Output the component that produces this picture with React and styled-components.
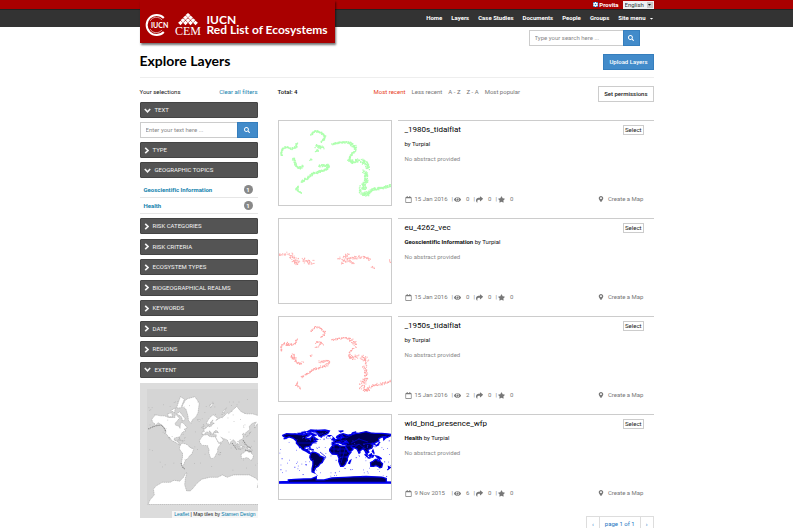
import React from "react";
import styled, { createGlobalStyle } from "styled-components";
import {
  FaSearch, FaRegCalendar, FaEye, FaShare,
  FaStar, FaMapMarkerAlt, FaCog, FaCaretDown,
} from "react-icons/fa";

const Global = createGlobalStyle`
  *, *::before, *::after { box-sizing: border-box; }
  html { scrollbar-width: none; }
  body { margin: 0; background: #fff; color: #111; font: 6px/10px Roboto, Lato, sans-serif; font-variant-ligatures: none; }
  button, input, select { font: inherit; margin: 0; border-radius: 0; }
  button { cursor: pointer; }
  a { text-decoration: none; color: inherit; }
  svg { display: block; flex: none; }
  h1, h2, p, ul { margin: 0; padding: 0; }
  ul { list-style: none; }
`;

/* ---------- page frame ---------- */
const Container = styled.div`
  position: relative;
  max-width: 514px;
  margin: 0 auto;
`;
const AccountBar = styled.div`
  background: #a90000;
`;
const AccountRow = styled(Container)`
  display: flex;
  justify-content: flex-end;
  align-items: center;
  gap: 4px;
  height: 9px;
  color: #fff;
`;
const Account = styled.a`
  display: flex;
  align-items: center;
  gap: 1px;
  font-weight: 700;
`;
const AccountIcon = styled.span`
  background: #1c7fc0;
  border-radius: 1px;
`;
const LanguageWrap = styled.span`
  display: flex;
  align-items: center;
  position: relative;
`;
const Language = styled.select`
  appearance: none;
  width: 31px;
  height: 8px;
  padding: 0 2px;
  border: 0;
  background: #eef0f2;
  color: #333;
  line-height: 8px;
`;
const SelectArrow = styled.span`
  position: absolute;
  right: 1px;
  top: 1px;
  display: grid;
  place-items: center;
  width: 6px;
  height: 6px;
  background: #c8c8c8;
  color: #111;
  pointer-events: none;
`;
const NavBar = styled.header`
  background: #333;
  border-top: 1px solid #222;
`;
const Nav = styled.nav`
  display: flex;
  justify-content: flex-end;
  align-items: center;
  gap: 9px;
  height: 17px;
  padding-bottom: 1px;
  color: #fff;
  font-weight: 700;
`;
const NavLink = styled.a`
  display: flex;
  align-items: center;
  gap: 3px;
`;
const Brand = styled.a`
  position: absolute;
  left: 0;
  top: -10px;
  display: flex;
  align-items: center;
  gap: 5px;
  width: 195px;
  height: 43px;
  padding: 6px 5px 0;
  background: #a90000;
  box-shadow: 1px 2px 2px rgba(0, 0, 0, 0.55);
  color: #fff;
  font: 700 12px/10px Lato, sans-serif;
  white-space: nowrap;
`;

/* ---------- form pieces ---------- */
const SearchForm = styled.form`
  display: flex;
  width: ${(p) => p.$width || "100%"};
  height: 16px;
`;
const SearchInput = styled.input`
  flex: 1;
  min-width: 0;
  padding: 0 5px;
  border: 1px solid #ccc;
  border-right: 0;
  background: #fff;
  color: #333;
  outline: 0;
  &::placeholder { color: #888; opacity: 1; }
`;
const SearchButton = styled.button`
  display: grid;
  place-items: center;
  width: ${(p) => p.$width || "17px"};
  padding: 0;
  border: 1px solid #357ebd;
  background: #428bca;
  color: #fff;
`;
const ActionButton = styled.button`
  height: 16px;
  padding: 0 5px;
  border: 1px solid ${(p) => (p.$primary ? "#357ebd" : "#ccc")};
  background: ${(p) => (p.$primary ? "#428bca" : "#fff")};
  color: ${(p) => (p.$primary ? "#fff" : "#222")};
  font-weight: 500;
  line-height: 14px;
  white-space: nowrap;
`;
const SearchRow = styled.div`
  display: flex;
  justify-content: flex-end;
  padding: 3px 14px 0 0;
`;
const TitleRow = styled.div`
  display: flex;
  justify-content: space-between;
  align-items: flex-start;
  padding: 8px 0 7px;
  border-bottom: 1px solid #eee;
`;
const Title = styled.h1`
  font: 700 14px/14px Lato, sans-serif;
  color: #000;
`;
const Columns = styled.main`
  display: grid;
  grid-template-columns: 118px minmax(0, 1fr);
  gap: 20px;
  align-items: start;
  padding-top: 8px;
`;

/* ---------- sidebar ---------- */
const Sidebar = styled.aside`
  display: flex;
  flex-direction: column;
  gap: 4px;
`;
const SelectionRow = styled.div`
  display: flex;
  justify-content: space-between;
  line-height: 12px;
`;
const BlueLink = styled.a`
  color: #1583ae;
`;
const FilterButton = styled.button`
  display: flex;
  align-items: center;
  gap: 4px;
  width: 100%;
  height: 16px;
  padding: 0 3px;
  border: 1px solid #444;
  border-radius: 1px;
  background: #545454;
  color: #f4f4f4;
  line-height: 10px;
  text-transform: uppercase;
`;
const FilterStack = styled.div`
  display: flex;
  flex-direction: column;
  justify-content: space-between;
  min-height: ${(p) => p.$height};
`;
const TopicItem = styled.li`
  display: flex;
  justify-content: space-between;
  align-items: center;
  height: 16px;
  padding: 0 5px 0 4px;
  border-bottom: 1px solid #e6e6e6;
  color: #1583ae;
  font-weight: 700;
`;
const Count = styled.span`
  width: 9px;
  height: 9px;
  border-radius: 5px;
  background: #888;
  color: #fff;
  line-height: 9px;
  text-align: center;
`;
const ExtentMap = styled.div`
  position: relative;
  margin-top: 1px;
  background: #dadada;
  svg { width: 100%; height: auto; }
`;
const Attribution = styled.div`
  position: absolute;
  right: 0;
  bottom: 0;
  padding: 0 2px;
  background: rgba(255, 255, 255, 0.75);
  font: 5px/7px "Liberation Sans", Arial, sans-serif;
  white-space: nowrap;
  a { color: #0078a8; }
`;

/* ---------- layer list ---------- */
const ListHeader = styled.div`
  display: flex;
  align-items: flex-start;
  padding-bottom: 18px;
`;
const Total = styled.strong`
  width: 96px;
  font-weight: 500;
  line-height: 12px;
`;
const SortList = styled.ul`
  display: flex;
  flex: 1;
  gap: 6px;
  line-height: 12px;
`;
const SortLink = styled.a`
  color: ${(p) => (p.$active ? "#e8401c" : "#777")};
`;
const Cards = styled.div`
  display: flex;
  flex-direction: column;
  gap: 12px;
`;
const Card = styled.article`
  display: grid;
  grid-template-columns: 114px minmax(0, 1fr);
  gap: 6px;
  min-height: 86px;
`;
const Thumb = styled.div`
  border: 1px solid #ccc;
  svg { width: 100%; height: auto; }
`;
const Body = styled.div`
  display: flex;
  flex-direction: column;
  padding: 4px 10px 2px 7px;
  border-top: 1px solid #ccc;
`;
const CardTop = styled.div`
  display: flex;
  justify-content: space-between;
  align-items: flex-start;
`;
const CardTitle = styled.h2`
  font-size: 8px;
  line-height: 9px;
  font-weight: 400;
  color: #000;
`;
const SelectButton = styled.button`
  height: 10px;
  padding: 0 1px;
  border: 1px solid #ccc;
  background: #fff;
  color: #222;
  line-height: 8px;
`;
const Byline = styled.p`
  padding-top: 4px;
`;
const Abstract = styled.p`
  padding-top: 5px;
  color: #8a8a8a;
`;
const Meta = styled.div`
  display: flex;
  align-items: center;
  margin-top: auto;
  color: #777;
`;
const DateText = styled.span`
  display: flex;
  align-items: center;
  gap: 3px;
  width: 47px;
  white-space: nowrap;
`;
const Stat = styled.span`
  display: flex;
  align-items: center;
  gap: 1px;
  width: 22px;
`;
const StatValue = styled.span`
  padding-left: 4px;
`;
const MapLink = styled.a`
  display: flex;
  align-items: center;
  gap: 4px;
  margin-left: auto;
`;
const Pager = styled.nav`
  display: flex;
  justify-content: flex-end;
  padding-top: 16px;
`;
const PageLink = styled.a`
  height: 15px;
  padding: 0 5px;
  border: 1px solid #ddd;
  border-left-width: ${(p) => (p.$first ? "1px" : "0")};
  color: #1a73c0;
  line-height: 14px;
`;

/* ---------- drawings ---------- */
const LAND = [
  [[-168,66],[-156,71],[-141,70],[-128,70],[-115,68],[-95,68],[-94,72],[-85,69],[-81,67],[-87,64],[-94,60],[-93,57],[-82,55],[-79,51],[-78,58],[-74,62],[-66,59],[-60,55],[-56,52],[-66,49],[-60,46],[-70,43],[-74,40],[-76,35],[-81,31],[-80,25],[-83,30],[-90,29],[-97,27],[-97,21],[-91,19],[-87,21],[-88,16],[-83,15],[-83,10],[-77,8],[-83,8],[-92,14],[-105,20],[-109,26],[-114,31],[-112,24],[-117,33],[-124,40],[-124,48],[-133,56],[-148,61],[-158,56],[-165,54],[-158,59],[-166,62]],
  [[-77,8],[-72,12],[-62,10],[-51,4],[-50,0],[-35,-6],[-39,-15],[-41,-22],[-48,-26],[-54,-34],[-62,-39],[-65,-45],[-69,-52],[-67,-55],[-74,-52],[-74,-42],[-71,-30],[-71,-18],[-77,-13],[-81,-5],[-80,1]],
  [[-73,78],[-60,82],[-32,83],[-18,80],[-22,73],[-28,69],[-40,65],[-44,60],[-52,64],[-54,70],[-60,76]],
  [[-17,15],[-17,21],[-10,30],[-6,35],[10,37],[11,33],[20,31],[32,31],[35,27],[43,12],[51,11],[44,2],[40,-5],[40,-15],[35,-22],[32,-29],[26,-34],[18,-34],[12,-18],[13,-8],[9,0],[9,4],[-4,5],[-9,5]],
  [[-9,37],[-9,43],[-2,44],[-4,48],[4,52],[8,54],[10,57],[12,54],[20,55],[24,59],[30,60],[22,61],[25,65],[18,62],[17,57],[11,59],[5,59],[6,62],[15,68],[26,71],[41,67],[34,64],[45,67],[58,69],[70,73],[75,72],[82,74],[100,78],[114,74],[130,72],[150,72],[170,70],[180,69],[180,65],[170,60],[163,58],[157,51],[156,57],[162,62],[150,60],[140,55],[141,48],[131,43],[126,39],[129,36],[125,37],[121,40],[118,38],[122,31],[118,24],[109,21],[106,17],[109,12],[105,9],[101,13],[104,2],[99,9],[96,16],[91,22],[87,21],[80,15],[80,10],[77,8],[73,17],[70,22],[62,25],[56,27],[50,30],[57,24],[58,20],[52,16],[44,13],[38,22],[34,29],[36,36],[27,37],[28,41],[41,42],[38,46],[32,46],[28,43],[23,37],[19,42],[13,46],[18,40],[12,42],[5,43],[0,40],[-3,37]],
  [[114,-22],[122,-18],[130,-12],[136,-12],[137,-16],[140,-17],[142,-11],[146,-19],[153,-26],[150,-37],[144,-39],[138,-34],[131,-32],[124,-34],[115,-34]],
  [[-5,50],[1,51],[-2,55],[-5,58],[-4,54]], [[-10,52],[-6,52],[-6,55],[-9,54]],
  [[-24,65],[-15,65],[-18,63]], [[131,31],[140,35],[141,41],[145,44],[139,38]],
  [[44,-24],[49,-16],[50,-15],[47,-25]], [[95,5],[105,-5],[103,0]],
  [[109,1],[117,6],[118,1],[114,-4]], [[131,-1],[140,-3],[150,-10],[138,-8]],
  [[105,-7],[114,-8],[108,-6]], [[119,-5],[120,1],[124,1],[122,-4]],
  [[120,14],[122,18],[126,7],[123,10]], [[172,-35],[178,-38],[168,-46],[173,-42]],
  [[-84,22],[-75,20],[-78,22]], [[-73,19],[-68,18],[-72,20]],
  [[-90,72],[-80,74],[-62,66],[-70,63],[-75,69]], [[-118,72],[-105,73],[-103,69],[-116,69]],
  [[-90,77],[-78,83],[-65,82],[-76,77]], [[-96,73],[-94,77],[-108,75]],
  [[53,71],[58,75],[68,77],[57,72]], [[15,79],[27,80],[18,77]],
];
const ANTARCTICA = [[-180,-85.3],[-174,-84],[-160,-82],[-163,-79],[-155,-77],[-135,-74],[-110,-74],[-98,-72],[-80,-73],[-68,-69],[-62,-64],[-57,-63],[-62,-70],[-64,-76],[-58,-80],[-46,-80],[-36,-78],[-26,-75],[-10,-71],[15,-69],[40,-69],[55,-66],[70,-69],[90,-66],[115,-66],[140,-66],[160,-70],[170,-73],[165,-78],[180,-78]];

const rand = (n) => {
  const v = Math.sin(n * 127.1 + 3.7) * 43758.5453;
  return v - Math.floor(v);
};
const toPath = (ring, project) =>
  "M" + ring.map((p) => project(p).map((v) => v.toFixed(1)).join(" ")).join("L") + "Z";

const mercator = ([lon, lat]) => {
  const y = Math.log(Math.tan(Math.PI / 4 + (lat * Math.PI) / 360));
  return [8 + ((lon + 180) * 114) / 360, 64 - y * 18];
};
const flat = ([lon, lat]) => [((lon + 180) * 112) / 360, 15 + (83 - lat) * 0.31];

function WorldExtent() {
  const ring = [...ANTARCTICA, [180, -85.3]];
  return (
    <svg viewBox="0 0 118 135" role="img" aria-label="World map">
      <rect width="118" height="135" fill="#dcdcdc" />
      <rect x="7" y="6" width="111" height="116" fill="#d5d5d5" />
      {[...LAND, ring].map((r, i) => (
        <path key={i} d={toPath(r, mercator)} fill="#fff" stroke="#999" strokeWidth=".5" strokeDasharray="1.4 .5" />
      ))}
      <path d="M8 46l7-3 6-1 3 3 2 4M41 80l2 5 2 1M103 57l4 6 4 2M105 67l7 2M92 60l5 7" fill="none" stroke="#666" strokeWidth=".7" strokeDasharray="1.5 .7" />
      {Array.from({ length: 80 }, (_, i) => (
        <rect key={i} x={8 + rand(i) * 108} y={16 + rand(i + 200) * 72} width=".7" height=".7" fill="#aaa" />
      ))}
    </svg>
  );
}

function WorldPresence() {
  const ring = [[-180,-84],[-150,-83],[-150,-78],[-130,-76],[-100,-75],[-75,-74],[-60,-68],[-60,-78],[-35,-78],[-10,-72],[30,-70],[60,-68],[100,-67],[150,-69],[165,-73],[165,-84],[180,-85],[180,-88],[-180,-88]];
  return (
    <svg viewBox="0 0 112 84" role="img" aria-label="wld_bnd_presence_wfp preview">
      {[...LAND, ring].map((r, i) => (
        <path key={i} d={toPath(r, flat)} fill="#000050" stroke="#0000ee" strokeWidth="1.3" />
      ))}
      <path d="M15 19H43M18 28H37M41 37L47 42 43 48M52 34H69M55 30V40M61 31V46M66 34L62 48M53 38H68M62 42H70M57 25L61 20 67 23 73 20M57 27L67 25 70 29M72 28L80 24 89 27M75 33L80 29 86 34M84 29L96 28M60 22L65 30M68 31L78 30" fill="none" stroke="#0000e8" strokeWidth=".7" />
      {Array.from({ length: 170 }, (_, i) => {
        const north = i % 3 === 0;
        return (
          <rect key={i} x={(north ? 23 : 0) + rand(i) * (north ? 28 : 112)} y={(north ? 15 : 23) + rand(i + 400) * (north ? 10 : 38)} width={i % 4 ? 0.6 : 1.1} height=".8" fill="#2020ff" />
        );
      })}
      <path d="M0 67.5H112" stroke="#0000f0" strokeWidth="1.4" />
    </svg>
  );
}

/* Polylines: scatter width, then the points. */
const TIDAL = [
  [1, [18,22],[17,26],[12,28],[8,26],[4,27],[2,31],[3,35]],
  [1, [32,14],[36,10],[41,11],[46,15],[45,18],[42,21]],
  [2, [37,25],[44,27]], [1, [37,30],[40,29]], [1, [31,39],[33,38]],
  [1.4, [14,37],[16,41],[17,45],[21,47],[24,45]],
  [1, [53,23],[58,22],[66,21],[72,22]], [2, [71,22],[76,26],[76,30]], [1, [75,31],[71,35],[70,40]],
  [2.4, [70,39],[74,41],[79,39]], [2.8, [82,40],[87,42],[89,47]], [2.4, [85,50],[87,54],[87,61],[84,65]],
  [5, [84,66],[84,72]], [2, [84,73],[90,74]], [1.6, [88,72],[95,68],[103,67],[112,64]],
  [1.4, [40,45],[50,44],[48,48],[42,50],[33,53],[28,57],[22,61]],
  [1, [19,65],[17,68],[22,72]],
];
function Scatter({ lines, color, density, label, size }) {
  const marks = [];
  let n = 1;
  lines.forEach(([spread, ...pts]) => {
    for (let i = 1; i < pts.length; i++) {
      const [a, b] = [pts[i - 1], pts[i]];
      const count = Math.ceil(Math.hypot(b[0] - a[0], b[1] - a[1]) * density * (1 + spread));
      for (let k = 0; k < count; k++) {
        n++;
        const t = k / count;
        const x = a[0] + (b[0] - a[0]) * t + (rand(n) - 0.5) * spread * 1.5;
        const y = a[1] + (b[1] - a[1]) * t + (rand(n + 900) - 0.5) * spread * 1.5;
        marks.push(<rect key={n} x={x - 0.5} y={y - 0.5} width={size} height={size} fill={color} />);
      }
    }
  });
  return <svg viewBox="0 0 112 84" role="img" aria-label={label}>{marks}</svg>;
}
const EURO = [
  [1.4, [0,36],[7,35]], [4, [10,36],[15,40],[19,42]], [2, [14,43],[20,45]], [3, [24,41],[29,43],[34,43]],
  [1.5, [59,40],[61,39]], [2, [64,41],[67,36],[70,36]], [2, [63,44],[70,40],[80,38]], [1.5, [80,38],[90,39],[91,42]],
  [2, [70,42],[75,44]], [1, [93,48],[96,49]], [1, [111,41],[111,44]],
];
const DARK_TIDAL = [[0.8, [7,28],[11,28]], [0.8, [12,39],[15,43]]];

function IucnMark() {
  return (
    <svg width="24" height="24" viewBox="0 0 24 24" role="img" aria-label="IUCN">
      <path d="M18.8 5A10 10 0 1 0 18.8 19" fill="none" stroke="#fff" strokeWidth="2" />
      <path d="M17 7.1A7.2 7.2 0 0 0 5 8M17 16.9A7.2 7.2 0 0 1 5 16" fill="none" stroke="#fff" strokeWidth=".6" />
      <text x="6" y="14.5" fill="#fff" fontSize="7" fontWeight="700" fontFamily="Lato, sans-serif">IUCN</text>
    </svg>
  );
}
function CemMark() {
  const diamonds = [];
  for (let row = 0; row < 4; row++)
    for (let k = 0; k <= row; k++) {
      const x = 14 + (k - row / 2) * 5;
      const y = 4 + row * 2.6;
      diamonds.push(<path key={`${row}-${k}`} d={`M${x} ${y - 2}l2.4 1.9-2.4 2.6-2.4-2.6z`} />);
    }
  return (
    <svg width="28" height="28" viewBox="0 0 28 28" fill="#fff" role="img" aria-label="CEM">
      {diamonds}
      <text x="14" y="24" textAnchor="middle" fontSize="12" fontWeight="400" fontFamily="Liberation Serif, serif">CEM</text>
    </svg>
  );
}
function Chevron({ open }) {
  return (
    <svg width={open ? 7 : 5} height="7" viewBox={open ? "0 0 7 7" : "0 0 5 7"} fill="none" stroke="currentColor" strokeWidth="1.6" aria-hidden="true">
      <path d={open ? "M.8 2l2.7 2.8L6.2 2" : "M1.2.8L4 3.5 1.2 6.2"} />
    </svg>
  );
}

/* ---------- content ---------- */
const NAV = ["Home", "Layers", "Case Studies", "Documents", "People", "Groups"];
const CLOSED = ["Risk categories", "Risk criteria", "Ecosystem types", "Biogeographical realms", "Keywords", "Date", "Regions"];
const SORTS = ["Most recent", "Less recent", "A - Z", "Z - A", "Most popular"];
const LAYERS = [
  { name: "_1980s_tidalflat", date: "15 Jan 2016", views: 0, art: <Scatter lines={TIDAL} color="#adffad" density={1.3} size="1.2" label="_1980s_tidalflat preview" /> },
  { name: "eu_4262_vec", topic: "Geoscientific Information", date: "15 Jan 2016", views: 0, art: <Scatter lines={EURO} color="#ffabab" density={0.8} size="1" label="eu_4262_vec preview" /> },
  { name: "_1950s_tidalflat", date: "15 Jan 2016", views: 2, art: <Scatter lines={[...TIDAL, ...DARK_TIDAL, ...DARK_TIDAL]} color="#ffa0a0" density={0.75} size="1" label="_1950s_tidalflat preview" /> },
  { name: "wld_bnd_presence_wfp", topic: "Health", date: "9 Nov 2015", views: 6, art: <WorldPresence /> },
];

function Filter({ open, children }) {
  return (
    <FilterButton type="button" aria-expanded={!!open}>
      <Chevron open={open} />
      {children}
    </FilterButton>
  );
}
function Search({ label, width, buttonWidth }) {
  return (
    <SearchForm $width={width} onSubmit={(e) => e.preventDefault()}>
      <SearchInput aria-label={label} placeholder={`${label} ...`} />
      <SearchButton $width={buttonWidth} aria-label="Search"><FaSearch size={6} /></SearchButton>
    </SearchForm>
  );
}
function LayerCard({ layer }) {
  return (
    <Card>
      <Thumb>{layer.art}</Thumb>
      <Body>
        <CardTop>
          <CardTitle>{layer.name}</CardTitle>
          <SelectButton type="button">Select</SelectButton>
        </CardTop>
        <Byline>{layer.topic && <b>{layer.topic} </b>}by Turpial</Byline>
        <Abstract>No abstract provided</Abstract>
        <Meta>
          <DateText><FaRegCalendar size={7} />{layer.date}</DateText>
          <Stat>|<FaEye size={7} /><StatValue>{layer.views}</StatValue></Stat>
          <Stat>|<FaShare size={7} /><StatValue>0</StatValue></Stat>
          <Stat>|<FaStar size={7} /><StatValue>0</StatValue></Stat>
          <MapLink href="#map"><FaMapMarkerAlt size={6} />Create a Map</MapLink>
        </Meta>
      </Body>
    </Card>
  );
}

export default function App() {
  return (
    <>
      <Global />
      <AccountBar>
        <AccountRow>
          <Account href="#profile"><AccountIcon><FaCog size={5} /></AccountIcon>Provita</Account>
          <LanguageWrap>
            <Language aria-label="Language" defaultValue="English"><option>English</option></Language>
            <SelectArrow><FaCaretDown size={5} /></SelectArrow>
          </LanguageWrap>
        </AccountRow>
      </AccountBar>
      <NavBar>
        <Container>
          <Nav>
            {NAV.map((n) => <NavLink key={n} href="#nav">{n}</NavLink>)}
            <NavLink href="#menu">Site menu <FaCaretDown size={5} /></NavLink>
          </Nav>
          <Brand href="#home">
            <IucnMark />
            <CemMark />
            <span>IUCN<br />Red List of Ecosystems</span>
          </Brand>
        </Container>
      </NavBar>
      <Container>
        <SearchRow><Search label="Type your search here" width="111px" /></SearchRow>
        <TitleRow>
          <Title>Explore Layers</Title>
          <ActionButton $primary>Upload Layers</ActionButton>
        </TitleRow>
        <Columns>
          <Sidebar>
            <SelectionRow>
              <span>Your selections</span>
              <BlueLink href="#clear">Clear all filters</BlueLink>
            </SelectionRow>
            <Filter open>Text</Filter>
            <Search label="Enter your text here" buttonWidth="21px" />
            <Filter>Type</Filter>
            <Filter open>Geographic topics</Filter>
            <ul>
              <TopicItem><a href="#geo">Geoscientific Information</a><Count>1</Count></TopicItem>
              <TopicItem><a href="#health">Health</a><Count>1</Count></TopicItem>
            </ul>
            <FilterStack $height="160px">
              {CLOSED.map((c) => <Filter key={c}>{c}</Filter>)}
              <Filter open>Extent</Filter>
            </FilterStack>
            <ExtentMap>
              <WorldExtent />
              <Attribution><a href="#leaflet">Leaflet</a> | Map tiles by <a href="#stamen">Stamen Design</a></Attribution>
            </ExtentMap>
          </Sidebar>
          <section>
            <ListHeader>
              <Total>Total: 4</Total>
              <SortList>
                {SORTS.map((s, i) => <li key={s}><SortLink href="#sort" $active={i === 0}>{s}</SortLink></li>)}
              </SortList>
              <ActionButton type="button">Set permissions</ActionButton>
            </ListHeader>
            <Cards>{LAYERS.map((l) => <LayerCard key={l.name} layer={l} />)}</Cards>
            <Pager aria-label="Pages">
              <PageLink $first href="#prev">‹</PageLink>
              <PageLink href="#page">page 1 of 1</PageLink>
              <PageLink href="#next">›</PageLink>
            </Pager>
          </section>
        </Columns>
      </Container>
    </>
  );
}
